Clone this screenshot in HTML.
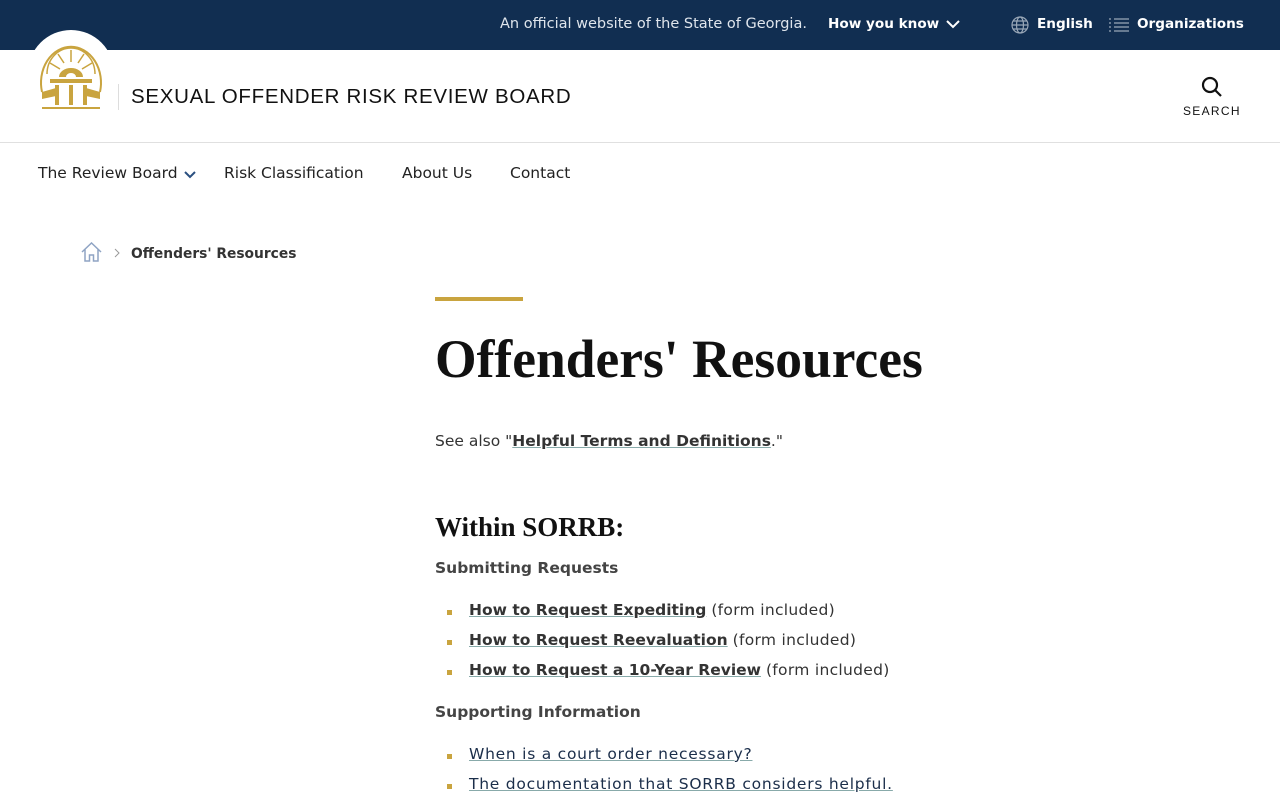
<!DOCTYPE html>
<html><head><meta charset="utf-8"><style>
*{margin:0;padding:0;box-sizing:border-box}
body{width:1280px;height:800px;overflow:hidden;background:#fff;font-family:"DejaVu Sans","Liberation Sans",sans-serif;color:#333}
.top{height:50px;background:#112e51;position:relative;color:#fff;font-size:13.6px;font-weight:bold}
.top span{position:absolute;top:16px;white-space:nowrap}
.hdr{height:93px;border-bottom:1px solid #e0e0e0;position:relative}
.logo{position:absolute;left:28px;top:-20px;width:86px;height:86px;border-radius:50%;background:#fff}
.title{position:absolute;left:131px;top:35px;font-family:"Liberation Sans",sans-serif;font-size:20.5px;color:#111;letter-spacing:0.7px}
.sep{position:absolute;left:118px;top:34px;width:1px;height:26px;background:#ddd}
.nav{position:absolute;top:164px;font-size:15.5px;color:#222}
a{color:#333;font-weight:bold;text-decoration:underline;text-decoration-color:#8aa}
p,li{font-size:15.5px}
ul{list-style:none}
li{position:absolute;left:469px;white-space:nowrap}
li span{letter-spacing:0.3px}
li:before{content:"";position:absolute;left:-22px;top:9px;width:5px;height:5px;background:#c9a43f}
.abs{position:absolute;white-space:nowrap}
.lt{font-weight:normal;color:#1b2e4a;letter-spacing:0.75px}
</style></head><body>
<div class="top">
<span style="left:500px;font-weight:normal;color:#dfe5ec;font-size:14.5px;top:16px">An official website of the State of Georgia.</span>
<span style="left:828px">How you know</span>
<svg class="abs" style="left:946px;top:19px" width="14" height="10" viewBox="0 0 14 10"><path d="M1 2l6 6 6-6" stroke="#fff" stroke-width="2" fill="none"/></svg>
<svg class="abs" style="left:1011px;top:16px" width="18" height="18" viewBox="0 0 18 18" fill="none" stroke="#9aa8b8" stroke-width="1.2"><circle cx="9" cy="9" r="8"/><ellipse cx="9" cy="9" rx="3.5" ry="8"/><path d="M1 9h16M2.5 5h13M2.5 13h13"/></svg>
<span style="left:1037px">English</span>
<svg class="abs" style="left:1109px;top:17px" width="20" height="16" viewBox="0 0 20 16" stroke="#9aa8b8" stroke-width="1.2"><path d="M5 2h15M5 6h15M5 10h15M5 14h15M0 2h2M0 6h2M0 10h2M0 14h2"/></svg>
<span style="left:1137px">Organizations</span>
</div>
<div class="hdr">
<div class="logo"><svg width="86" height="86" viewBox="0 0 86 86" fill="#c9a43f"><path d="M14 62 A30 36 0 1 1 72 62" fill="none" stroke="#c9a43f" stroke-width="2"/><path d="M19 44 A24 26 0 0 1 67 44" fill="none" stroke="#c9a43f" stroke-width="1.5"/><path d="M31 47a12 9 0 0 1 24 0h-7a5 4 0 0 0-10 0z"/><rect x="22" y="49" width="42" height="4"/><rect x="27" y="55" width="4" height="20"/><rect x="41" y="55" width="4" height="20"/><rect x="55" y="55" width="4" height="20"/><path d="M14 62l14-4v8l-14 3zM72 62l-14-4v8l14 3z"/><rect x="14" y="77" width="58" height="2"/><path d="M43 20v12M30 24l6 9M56 24l-6 9M22 33l10 6M64 33l-10 6" stroke="#c9a43f" stroke-width="1.5"/></svg></div>
<div class="sep"></div>
<div class="title">SEXUAL OFFENDER RISK REVIEW BOARD</div>
<svg class="abs" style="left:1200px;top:25px" width="24" height="24" viewBox="0 0 24 24" fill="none" stroke="#111" stroke-width="2.2"><circle cx="10" cy="10" r="7"/><path d="M15 15l6 6"/></svg>
<div class="abs" style="left:1183px;top:54px;font-size:12px;letter-spacing:1.3px;color:#111;font-family:'Liberation Sans',sans-serif">SEARCH</div>
</div>
<div class="nav" style="left:38px">The Review Board</div>
<svg class="abs" style="left:184px;top:170px" width="12" height="9" viewBox="0 0 12 9"><path d="M1 2l5 5 5-5" stroke="#2a4f80" stroke-width="2" fill="none"/></svg>
<div class="nav" style="left:224px">Risk Classification</div>
<div class="nav" style="left:402px">About Us</div>
<div class="nav" style="left:510px">Contact</div>
<svg class="abs" style="left:81px;top:242px" width="21" height="20" viewBox="0 0 21 20" fill="none" stroke="#8fa4c4" stroke-width="1.5"><path d="M1 10L10.5 1 20 10M4 7v12h4.5v-6h4v6H17V7"/></svg>
<svg class="abs" style="left:114px;top:248px" width="7" height="10" viewBox="0 0 7 10"><path d="M1 1l4 4-4 4" stroke="#999" fill="none"/></svg>
<div class="abs" style="left:131px;top:246px;font-size:13.8px;font-weight:bold;color:#333">Offenders' Resources</div>
<div class="abs" style="left:435px;top:297px;width:88px;height:4px;background:#c9a43f"></div>
<div class="abs" style="left:435px;top:328px;font-family:'Liberation Serif',serif;font-weight:bold;font-size:53.5px;color:#111">Offenders' Resources</div>
<p class="abs" style="left:435px;top:432px">See also "<a href="#">Helpful Terms and Definitions</a>."</p>
<div class="abs" style="left:435px;top:512px;font-family:'Liberation Serif',serif;font-weight:bold;font-size:27px;color:#111">Within SORRB:</div>
<p class="abs" style="left:435px;top:559px;font-weight:bold;color:#444">Submitting Requests</p>
<ul>
<li style="top:601px"><a href="#">How to Request Expediting</a> <span>(form included)</span></li>
<li style="top:631px"><a href="#">How to Request Reevaluation</a> <span>(form included)</span></li>
<li style="top:661px"><a href="#">How to Request a 10-Year Review</a> <span>(form included)</span></li>
</ul>
<p class="abs" style="left:435px;top:703px;font-weight:bold;color:#444">Supporting Information</p>
<ul>
<li style="top:745px"><a href="#" class="lt">When is a court order necessary?</a></li>
<li style="top:775px"><a href="#" class="lt">The documentation that SORRB considers helpful.</a></li>
</ul>
</body></html>
